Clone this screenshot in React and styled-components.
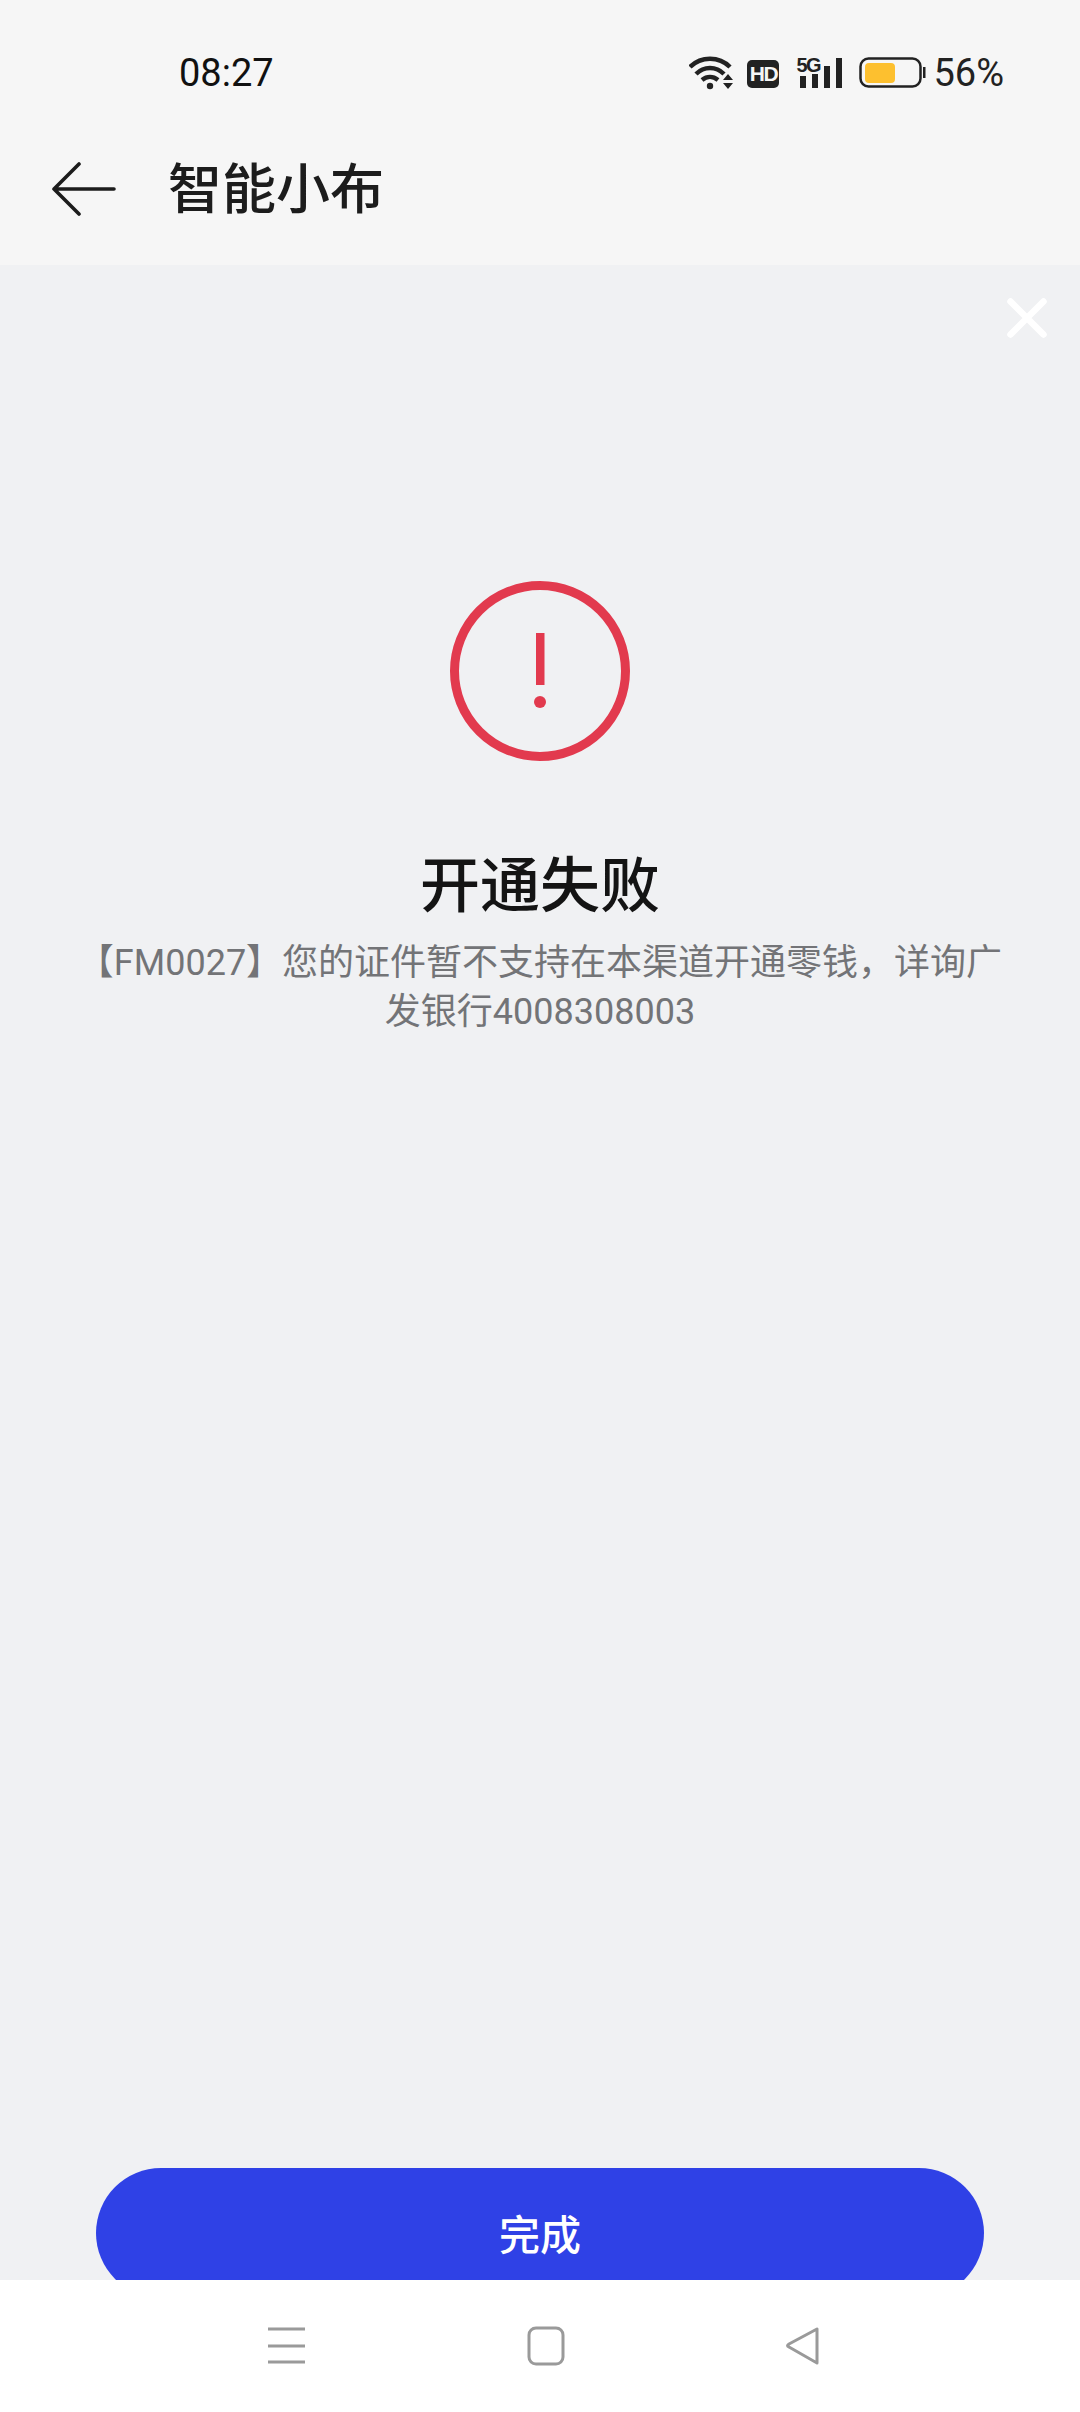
import React from 'react'
import styled, { createGlobalStyle } from 'styled-components'

const GlobalStyle = createGlobalStyle`
  html, body {
    margin: 0;
    padding: 0;
    background: #fff;
  }
  * {
    box-sizing: border-box;
  }
`

const Page = styled.div`
  display: flex;
  flex-direction: column;
  width: 1080px;
  height: 2412px;
  overflow: hidden;
  font-family: Roboto, "Noto Sans CJK SC", sans-serif;
`

const TopArea = styled.header`
  height: 265px;
  background: #f6f6f6;
`

const StatusBar = styled.div`
  display: flex;
  align-items: center;
  justify-content: space-between;
  height: 116px;
  padding: 30px 76px 0 179px;
`

const Time = styled.span`
  font-size: 38px;
  line-height: 44px;
  color: #111;
`

const StatusIcons = styled.div`
  display: flex;
  align-items: center;
  height: 40px;
`

const HdBadge = styled.span`
  display: flex;
  align-items: center;
  justify-content: center;
  width: 32px;
  height: 28px;
  margin: 2px 17px 0 12px;
  border-radius: 5px;
  background: #222;
  color: #f6f6f6;
  font-family: "Liberation Sans", sans-serif;
  font-size: 21px;
  font-weight: 700;
  letter-spacing: -1.5px;
`

const Signal = styled.div`
  position: relative;
  width: 48px;
  height: 34px;
`

const SignalLabel = styled.span`
  position: absolute;
  top: -1px;
  left: 0;
  font-family: "Liberation Sans", sans-serif;
  font-size: 20px;
  font-weight: 700;
  line-height: 20px;
  letter-spacing: -1.5px;
  color: #222;
`

const Percent = styled.span`
  margin-left: 6px;
  font-size: 38px;
  line-height: 40px;
  color: #222;
`

const TitleBar = styled.div`
  display: flex;
  align-items: center;
  height: 149px;
  padding: 0 0 0 52px;
`

const BackIcon = styled.svg`
  width: 66px;
  height: 54px;
  margin: 0 50px 4px 0;
`

const PageTitle = styled.h1`
  margin: 0;
  font-size: 54px;
  font-weight: 500;
  line-height: 60px;
  color: #1c1c1c;
`

const Main = styled.main`
  position: relative;
  flex: 1;
  display: flex;
  flex-direction: column;
  align-items: center;
  min-height: 0;
  padding-top: 316px;
  background: #f0f1f3;
  overflow: hidden;
`

const CloseIcon = styled.svg`
  position: absolute;
  top: 31px;
  right: 31px;
  width: 44px;
  height: 44px;
`

const ResultIcon = styled.svg`
  display: block;
  width: 180px;
  height: 180px;
`

const ResultTitle = styled.h2`
  margin: 90px 0 0;
  font-size: 60px;
  font-weight: 500;
  line-height: 72px;
  color: #141414;
`

const ResultText = styled.p`
  width: 930px;
  margin: 16px 0 0;
  font-size: 36px;
  line-height: 49px;
  text-align: center;
  color: #737477;
`

const DoneButton = styled.button`
  flex: none;
  width: 888px;
  height: 130px;
  margin: auto 0 -18px;
  padding: 0 0 2px;
  border: 0;
  border-radius: 65px;
  background: #2f41e6;
  color: #fff;
  font-family: inherit;
  font-size: 41px;
  font-weight: 500;
`

const NavBar = styled.nav`
  display: flex;
  align-items: center;
  flex: none;
  height: 132px;
  padding: 0 0 0 264px;
  background: #fff;
  gap: 216px;
`

const NavIcon = styled.svg`
  display: block;
  width: 44px;
  height: 40px;
`

export default function App() {
  return (
    <Page>
      <GlobalStyle />
      <TopArea>
        <StatusBar>
          <Time>08:27</Time>
          <StatusIcons>
            <svg width="46" height="34" viewBox="0 0 46 34">
              <path d="M1 11 C12 0 30 0 41 11" fill="none" stroke="#222" strokeWidth="4.5" />
              <path d="M7 18 C15 10 27 10 35 18" fill="none" stroke="#222" strokeWidth="4.5" />
              <path d="M13 24 C18 20 24 20 29 24" fill="none" stroke="#222" strokeWidth="4.5" />
              <circle cx="21" cy="30" r="3.2" fill="#222" />
              <path d="M39 18 L44 24 L34 24 Z M34 27 L44 27 L39 33 Z" fill="#222" />
            </svg>
            <HdBadge>HD</HdBadge>
            <Signal>
              <SignalLabel>5G</SignalLabel>
              <svg width="48" height="34" viewBox="0 0 48 34">
                <rect x="4" y="20" width="6" height="12" fill="#222" />
                <rect x="16" y="18" width="6" height="14" fill="#222" />
                <rect x="28" y="10" width="6" height="22" fill="#222" />
                <rect x="40" y="2" width="6" height="30" fill="#222" />
              </svg>
            </Signal>
            <svg width="68" height="34" viewBox="0 0 68 34" style={{ marginLeft: 15 }}>
              <rect x="1.5" y="2.5" width="60" height="28" rx="8" fill="none" stroke="#222" strokeWidth="2.5" />
              <rect x="6" y="7" width="30" height="20" rx="4" fill="#fdc02f" />
              <rect x="64" y="11" width="2.5" height="11" fill="#222" />
            </svg>
            <Percent>56%</Percent>
          </StatusIcons>
        </StatusBar>
        <TitleBar>
          <BackIcon viewBox="0 0 66 54">
            <path d="M27 2 L2 27 L27 52 M2 27 H62" fill="none" stroke="#1c1c1c" strokeWidth="3.6" strokeLinecap="round" strokeLinejoin="round" />
          </BackIcon>
          <PageTitle>智能小布</PageTitle>
        </TitleBar>
      </TopArea>
      <Main>
        <CloseIcon viewBox="0 0 44 44">
          <path d="M5.5 5.5 L38.5 38.5 M38.5 5.5 L5.5 38.5" fill="none" stroke="#fff" strokeWidth="6.5" strokeLinecap="round" />
        </CloseIcon>
        <ResultIcon viewBox="0 0 180 180">
          <circle cx="90" cy="90" r="85.5" fill="none" stroke="#e23a4e" strokeWidth="9" />
          <rect x="86" y="52" width="8.5" height="52" fill="#e23a4e" />
          <circle cx="90" cy="121" r="6" fill="#e23a4e" />
        </ResultIcon>
        <ResultTitle>开通失败</ResultTitle>
        <ResultText>【FM0027】您的证件暂不支持在本渠道开通零钱，详询广发银行4008308003</ResultText>
        <DoneButton>完成</DoneButton>
      </Main>
      <NavBar>
        <NavIcon viewBox="0 0 44 40">
          <path d="M4 3 H41 M4 20 H41 M4 36 H41" fill="none" stroke="#9a9a9a" strokeWidth="3" />
        </NavIcon>
        <NavIcon viewBox="0 0 44 40">
          <rect x="5" y="2" width="34" height="36" rx="7" fill="none" stroke="#9a9a9a" strokeWidth="3" />
        </NavIcon>
        <NavIcon viewBox="0 0 44 40">
          <path d="M33 3 L33 37 L5 21 Q2 20 5 18 Z" fill="none" stroke="#9a9a9a" strokeWidth="3" strokeLinejoin="round" />
        </NavIcon>
      </NavBar>
    </Page>
  )
}
